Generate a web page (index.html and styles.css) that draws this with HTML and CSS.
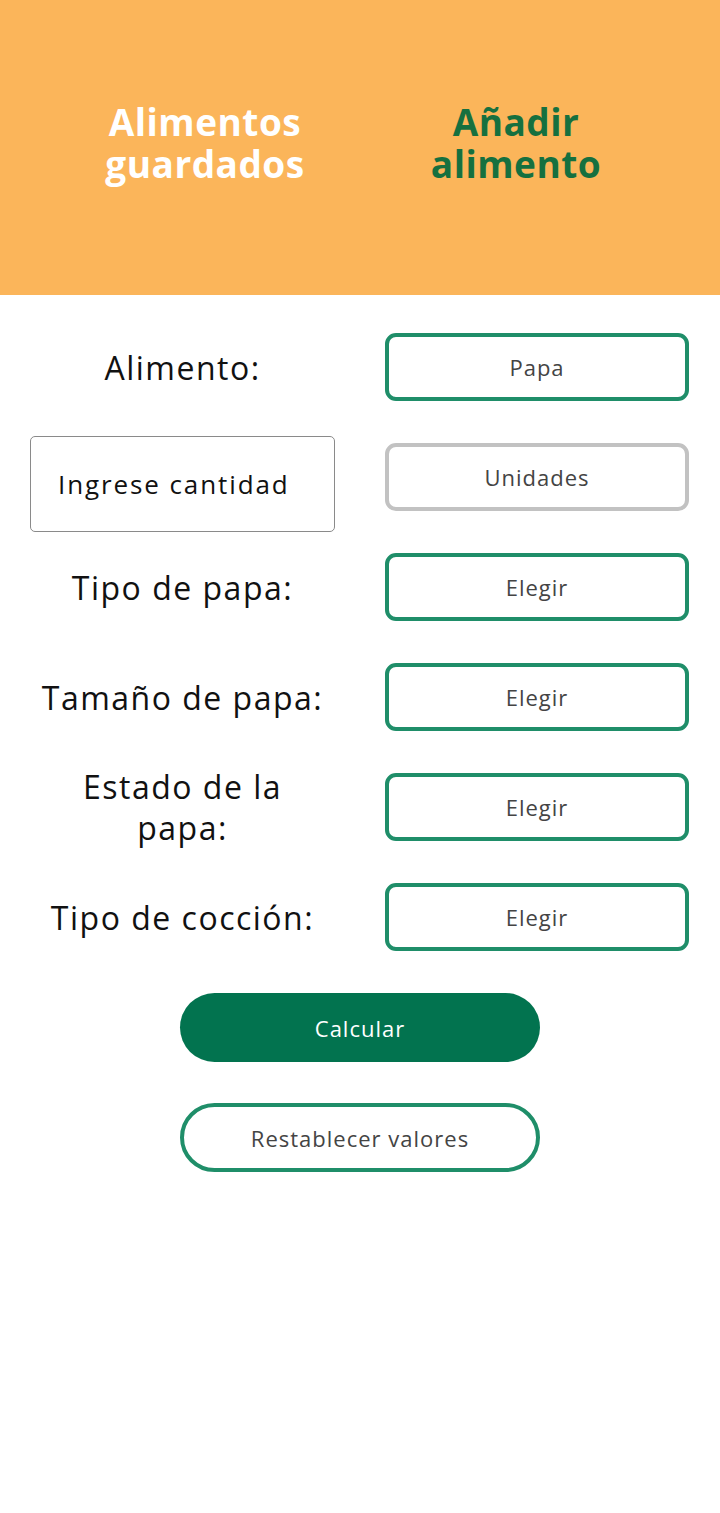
FILE: index.html
```html
<!DOCTYPE html>
<html lang="es">
<head>
    <meta charset="UTF-8">
    <meta name="viewport" content="width=device-width, initial-scale=1.0">
    <title>Calculadora de alimentos</title>
    <link rel="stylesheet" href="styles.css">
</head>
<body>
    <header class="tabs">
        <a class="tab" href="#">Alimentos guardados</a>
        <a class="tab tab-active" href="#">Añadir alimento</a>
    </header>

    <main class="form">
        <div class="row">
            <span class="label">Alimento:</span>
            <button class="select">Papa</button>
        </div>

        <div class="row">
            <input class="amount" type="text" placeholder="Ingrese cantidad">
            <button class="select select-off">Unidades</button>
        </div>

        <div class="row">
            <span class="label">Tipo de papa:</span>
            <button class="select">Elegir</button>
        </div>

        <div class="row">
            <span class="label">Tamaño de papa:</span>
            <button class="select">Elegir</button>
        </div>

        <div class="row">
            <span class="label label-wrap">Estado de la papa:</span>
            <button class="select">Elegir</button>
        </div>

        <div class="row">
            <span class="label">Tipo de cocción:</span>
            <button class="select">Elegir</button>
        </div>

        <div class="actions">
            <button class="btn btn-primary">Calcular</button>
            <button class="btn btn-outline">Restablecer valores</button>
        </div>
    </main>
</body>
</html>
```

FILE: styles.css
```css
body {
    margin: 0;
    padding: 0;
    background-color: #fff;
    font-family: "Open Sans", sans-serif;
}

.tabs {
    height: 295px;
    background-color: #fbb55a;
    display: grid;
    grid-template-columns: 330px 292px;
    padding: 0 0 10px 40px;
    align-items: center;
    box-sizing: border-box;
}

.tab {
    font-weight: 700;
    font-size: 37px;
    line-height: 42px;
    letter-spacing: 0.5px;
    text-align: center;
    color: #fff;
    text-decoration: none;
    padding: 0 50px;
}

.tab-active {
    color: #16703f;
    padding: 0 20px;
}

.form {
    padding: 38px 31px 0 30px;
}

.row {
    display: grid;
    grid-template-columns: 305px 304px;
    grid-template-rows: 68px;
    column-gap: 50px;
    align-items: center;
    margin-bottom: 42px;
}

.label {
    text-align: center;
    font-size: 32px;
    line-height: 41px;
    letter-spacing: 1.5px;
    color: #111;
}

.label-wrap {
    padding: 0 40px;
}

.select {
    height: 68px;
    background: #fff;
    border: 4px solid #1f8e69;
    border-radius: 11px;
    font-family: "Open Sans", sans-serif;
    font-size: 22px;
    letter-spacing: 1px;
    color: #444;
    cursor: pointer;
}

.select-off {
    border-color: #c2c2c2;
}

.amount {
    height: 96px;
    margin-top: 14px;
    box-sizing: border-box;
    border: 1px solid #8a8a8a;
    border-radius: 5px;
    padding: 0 0 0 27px;
    font-family: "Open Sans", sans-serif;
    font-size: 26px;
    letter-spacing: 1.9px;
    color: #111;
}

.amount::placeholder {
    color: #111;
}

.actions {
    display: flex;
    flex-direction: column;
    align-items: center;
    gap: 41px;
    margin-left: -30px;
    margin-right: -31px;
}

.btn {
    width: 360px;
    height: 69px;
    border-radius: 35px;
    font-family: "Open Sans", sans-serif;
    font-size: 22px;
    letter-spacing: 1px;
    cursor: pointer;
}

.btn-primary {
    background-color: #02734f;
    border: none;
    color: #fff;
}

.btn-outline {
    background-color: #fff;
    border: 4px solid #1f8e69;
    color: #444;
}
```
